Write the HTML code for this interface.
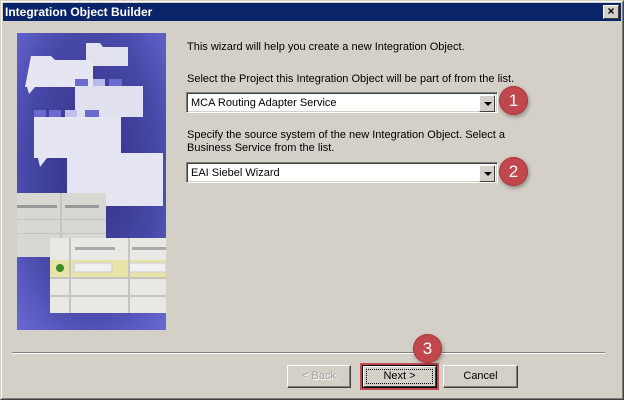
<!DOCTYPE html>
<html><head><style>
*{margin:0;padding:0;box-sizing:border-box}
body{width:624px;height:400px;background:#d4d0c8;position:relative;overflow:hidden;font-family:"Liberation Sans",Arial,sans-serif;font-size:11px;color:#000}
.a{position:absolute}
.win{left:0;top:0;width:624px;height:400px;border-top:1px solid #d4d0c8;border-left:1px solid #d4d0c8;border-right:1px solid #404040;border-bottom:1px solid #404040}
.win2{left:1px;top:1px;width:622px;height:398px;border-top:1px solid #fff;border-left:1px solid #fff;border-right:1px solid #808080;border-bottom:1px solid #808080}
.title{left:3px;top:3px;width:618px;height:18px;background:#0a246a;color:#fff;font-weight:bold;font-size:12px;line-height:18px;padding-left:2px}
.close{left:603px;top:5px;width:16px;height:14px;background:#d4d0c8;border-top:1px solid #fff;border-left:1px solid #fff;border-right:1px solid #404040;border-bottom:1px solid #404040;font-size:12px;font-weight:bold;line-height:11px;text-align:center;color:#000}
.combo{height:21px;background:#fff;border-top:1px solid #808080;border-left:1px solid #808080;border-right:1px solid #fff;border-bottom:1px solid #fff;box-shadow:inset 1px 1px 0 #404040,inset -1px -1px 0 #d4d0c8;padding:4px 4px;font-size:11px}
.dd{position:absolute;right:2px;top:2px;width:16px;height:17px;background:#d4d0c8;border-top:1px solid #fff;border-left:1px solid #fff;border-right:1px solid #404040;border-bottom:1px solid #404040}
.dd:after{content:"";position:absolute;left:4px;top:6px;border-left:4px solid transparent;border-right:4px solid transparent;border-top:4px solid #000}
.circ{width:29px;height:29px;border-radius:50%;background:#c0474c;color:#fff;font-size:17px;text-align:center;line-height:29px;box-shadow:1px 2px 4px rgba(0,0,0,.35),inset 0 0 0 1px #b03a40}
.btn{height:23px;background:#d4d0c8;border-top:1px solid #fff;border-left:1px solid #fff;border-right:1px solid #404040;border-bottom:1px solid #404040;box-shadow:inset -1px -1px 0 #808080;text-align:center;line-height:20px;font-size:11px}
</style></head><body>
<div class="a win"></div><div class="a win2"></div>
<div class="a title">Integration Object Builder</div>
<div class="a close">×</div>
<svg class="a" style="left:17px;top:33px" width="149" height="297" viewBox="0 0 149 297">
<defs><radialGradient id="g" cx="0.5" cy="0.45" r="0.75"><stop offset="0" stop-color="#303080"/><stop offset="0.6" stop-color="#4848a8"/><stop offset="1" stop-color="#6a6ad6"/></radialGradient></defs>
<rect width="149" height="297" fill="url(#g)"/>
<path d="M69 10h14l3 4h25v19h-42z" fill="#e2e2ee"/>
<path d="M14 23h20l4 4h38v27h-58l-6 7l-2-7h-2z" fill="#e6e6f2"/>
<rect x="58" y="53" width="68" height="31" fill="#e0e0ee"/>
<rect x="58" y="46" width="13" height="7" fill="#6a6ad0"/><rect x="76" y="46" width="12" height="7" fill="#b8b8ec"/><rect x="92" y="46" width="13" height="7" fill="#6a6ad0"/>
<path d="M17 84h87v41h-74l-7 9l-2-9h-4z" fill="#e6e6f2"/>
<rect x="17" y="77" width="12" height="7" fill="#6a6ad0"/><rect x="32" y="77" width="12" height="7" fill="#6a6ad0"/><rect x="48" y="77" width="12" height="7" fill="#c0c0f0"/><rect x="68" y="77" width="14" height="7" fill="#6a6ad0"/>
<path d="M50 115h25l5 5h66v53h-96z" fill="#e4e4f2"/>
<rect x="0" y="160" width="89" height="64" fill="#d8d8d2"/>
<rect x="0" y="172" width="40" height="3" fill="#999"/><rect x="48" y="172" width="34" height="3" fill="#999"/>
<rect x="0" y="186" width="89" height="1" fill="#c4c4c0"/><rect x="0" y="200" width="89" height="1" fill="#c4c4c0"/>
<rect x="43" y="160" width="2" height="64" fill="#c4c4c0"/>
<rect x="33" y="205" width="116" height="75" fill="#e8e8e4"/>
<rect x="33" y="227" width="116" height="17" fill="#e8e4a8"/>
<rect x="58" y="214" width="40" height="3" fill="#aaa"/><rect x="115" y="214" width="34" height="3" fill="#aaa"/>
<circle cx="43" cy="235" r="4" fill="#3a8a2a"/>
<rect x="57" y="230" width="38" height="9" fill="#f0f0f0" stroke="#ccc"/><rect x="112" y="230" width="37" height="9" fill="#f0f0f0" stroke="#ccc"/>
<rect x="33" y="244" width="116" height="2" fill="#c4c4c0"/><rect x="33" y="262" width="116" height="2" fill="#c4c4c0"/>
<rect x="52" y="205" width="2" height="75" fill="#c4c4c0"/><rect x="111" y="205" width="2" height="75" fill="#c4c4c0"/>
</svg>
<div class="a" style="left:187px;top:41px">This wizard will help you create a new Integration Object.</div>
<div class="a" style="left:187px;top:73px">Select the Project this Integration Object will be part of from the list.</div>
<div class="a combo" style="left:186px;top:92px;width:312px">MCA Routing Adapter Service<div class="dd"></div></div>
<div class="a circ" style="left:499px;top:86px">1</div>
<div class="a" style="left:187px;top:129px;line-height:13px">Specify the source system of the new Integration Object. Select a<br>Business Service from the list.</div>
<div class="a combo" style="left:186px;top:162px;width:312px">EAI Siebel Wizard<div class="dd"></div></div>
<div class="a circ" style="left:499px;top:157px">2</div>
<div class="a" style="left:12px;top:352px;width:593px;height:2px;border-top:1px solid #808080;border-bottom:1px solid #fff"></div>
<div class="a btn" style="left:287px;top:365px;width:64px;color:#a0a0a0;text-shadow:1px 1px 0 #fff">&lt; Back</div>
<div class="a btn" style="left:362px;top:365px;width:75px;border:1px solid #000;box-shadow:0 0 0 2px #c44a50,inset 1px 1px 0 #fff,inset -1px -1px 0 #404040"><div style="margin:3px;border:1px dotted #000;line-height:13px">Next &gt;</div></div>
<div class="a btn" style="left:443px;top:365px;width:75px">Cancel</div>
<div class="a circ" style="left:413px;top:334px">3</div>
</body></html>
